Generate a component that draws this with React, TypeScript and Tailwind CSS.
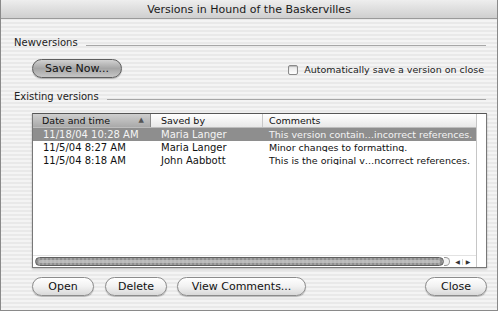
import React from "react";

type Row = { date: string; by: string; comment: string; selected?: boolean };

const rows: Row[] = [
  {
    date: "11/18/04 10:28 AM",
    by: "Maria Langer",
    comment: "This version contain…incorrect references.",
    selected: true,
  },
  { date: "11/5/04 8:27 AM", by: "Maria Langer", comment: "Minor changes to formatting." },
  {
    date: "11/5/04 8:18 AM",
    by: "John Aabbott",
    comment: "This is the original v…ncorrect references.",
  },
];

const stripes =
  "bg-[repeating-linear-gradient(to_bottom,#f4f4f4_0px,#f4f4f4_2px,#e9e9e9_2px,#e9e9e9_4px)]";

const AquaButton: React.FC<{ label: string; width: string; pressed?: boolean }> = ({
  label,
  width,
  pressed,
}) => (
  <button
    className={`${width} h-[19px] rounded-full border text-[11px] leading-none text-[#111] flex items-center justify-center shadow-[0_1px_1px_rgba(0,0,0,0.25)] ${
      pressed
        ? "border-[#5e5e5e] bg-gradient-to-b from-[#d2d2d2] via-[#a5a5a5] to-[#c6c6c6]"
        : "border-[#8c8c8c] bg-gradient-to-b from-white via-[#f1f1f1] to-[#d9d9d9]"
    }`}
  >
    {label}
  </button>
);

const SectionLabel: React.FC<{ text: string }> = ({ text }) => (
  <div className="flex items-center pl-[13px] pr-[11px] h-[12px]">
    <span className="text-[10px] leading-none text-[#222] whitespace-nowrap">{text}</span>
    <div className="flex-1 h-px bg-[#a6a6a6] ml-[8px] mt-[5px]" />
  </div>
);

const App: React.FC = () => {
  return (
    <div className="w-[500px] h-[312px] bg-white overflow-hidden font-['DejaVu_Sans',sans-serif]">
      <div className={`w-[498px] h-[311px] border border-t-0 border-[#8a8a8a] flex flex-col ${stripes}`}>
        {/* title bar */}
        <div className="h-[19px] flex items-center justify-center border-b border-[#9a9a9a] bg-gradient-to-b from-[#eeeeee] to-[#cfcfcf]">
          <span className="text-[11px] text-[#1a1a1a] leading-none">
            Versions in Hound of the Baskervilles
          </span>
        </div>

        <div className="mt-[18px]">
          <SectionLabel text="Newversions" />
        </div>

        <div className="mt-[10px] h-[19px] flex items-center pl-[31px] pr-[13px]">
          <AquaButton label="Save Now..." width="w-[90px]" pressed />
          <div className="ml-auto flex items-center mt-[3px]">
            <span className="w-[10px] h-[10px] rounded-[2px] border border-[#8a8a8a] bg-gradient-to-b from-[#e6e6e6] to-white shadow-[inset_0_1px_1px_rgba(0,0,0,0.2)]" />
            <span className="ml-[6px] text-[9.5px] leading-none text-[#222]">
              Automatically save a version on close
            </span>
          </div>
        </div>

        <div className="mt-[13px]">
          <SectionLabel text="Existing versions" />
        </div>

        {/* table */}
        <div className="mt-[10px] ml-[31px] mr-[10px] h-[155px] border border-[#777] border-t-[#555] bg-white flex shadow-[0_1px_2px_rgba(0,0,0,0.25)]">
          <div className="flex-1 flex flex-col">
            <div className="h-[14px] flex text-[9.5px] leading-none text-[#111] border-b border-[#bdbdbd]">
              <div className="w-[118px] flex items-center pl-[9px] pr-[6px] bg-gradient-to-b from-[#cfcfcf] to-[#a9a9a9] border-r border-[#8a8a8a]">
                <span>Date and time</span>
                <span className="ml-auto text-[7px] text-[#555]">▲</span>
              </div>
              <div className="w-[112px] flex items-center pl-[10px] bg-gradient-to-b from-white to-[#e8e8e8] border-r border-[#c8c8c8]">
                Saved by
              </div>
              <div className="flex-1 flex items-center pl-[6px] bg-gradient-to-b from-white to-[#e8e8e8]">
                Comments
              </div>
            </div>
            {rows.map((r) => (
              <div
                key={r.date}
                className={`h-[13px] flex items-center text-[10px] leading-none whitespace-nowrap ${
                  r.selected ? "bg-[#8e8e8e] text-[#f4f4f4]" : "text-[#111]"
                }`}
              >
                <div className="w-[118px] pl-[10px]">{r.date}</div>
                <div className="w-[112px] pl-[10px]">{r.by}</div>
                <div className="flex-1 pl-[6px] overflow-hidden text-[9.5px]">{r.comment}</div>
              </div>
            ))}
            <div className="flex-1" />
            {/* horizontal scroller */}
            <div className="h-[12px] flex items-center pl-[2px] border-t border-[#e2e2e2]">
              <div className="w-[409px] h-[9px] rounded-full border border-[#5f5f5f] bg-[repeating-linear-gradient(to_right,#8f8f8f_0px,#8f8f8f_2px,#a4a4a4_2px,#a4a4a4_4px)] flex items-center px-[3px]">
                <div className="w-full h-[3px] rounded-full bg-[#c9c9c9]/70" />
              </div>
              <div className="w-[6px] h-[9px] rounded-r-full border border-l-0 border-[#9a9a9a] bg-[#f2f2f2]" />
              <div className="ml-[3px] flex items-center text-[6px] text-[#333] leading-none">
                <span className="w-[10px] text-center border-r border-[#cfcfcf]">◀</span>
                <span className="w-[10px] text-center">▶</span>
              </div>
            </div>
          </div>
          <div className="w-[10px] border-l border-[#c6c6c6] bg-white" />
        </div>

        {/* buttons */}
        <div className="mt-[9px] flex items-center pl-[31px] pr-[10px]">
          <AquaButton label="Open" width="w-[62px]" />
          <div className="ml-[11px]">
            <AquaButton label="Delete" width="w-[62px]" />
          </div>
          <div className="ml-[10px]">
            <AquaButton label="View Comments..." width="w-[129px]" />
          </div>
          <div className="ml-auto">
            <AquaButton label="Close" width="w-[62px]" />
          </div>
        </div>
      </div>
    </div>
  );
};

export default App;
